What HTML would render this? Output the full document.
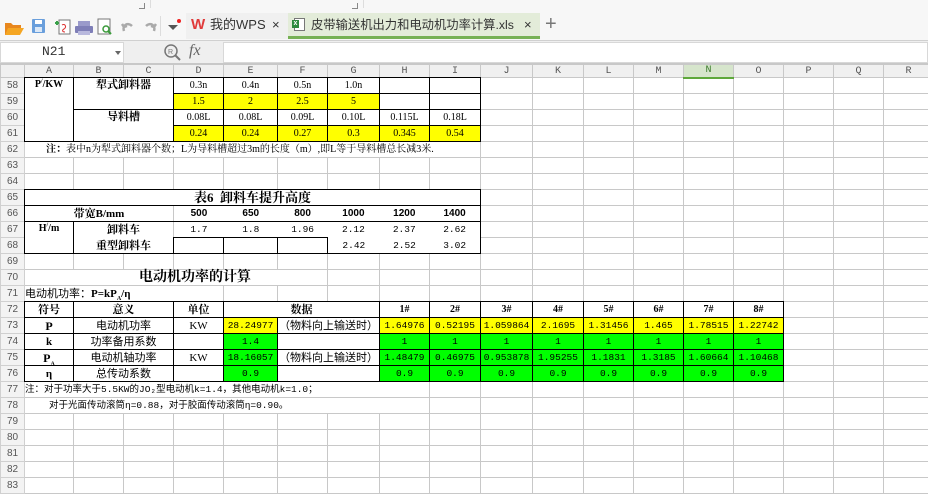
<!DOCTYPE html>
<html><head><meta charset="utf-8">
<style>
*{margin:0;padding:0;box-sizing:border-box}
body{width:928px;height:494px;overflow:hidden;background:#fff;position:relative;font-family:"Liberation Serif","Noto Serif CJK SC",serif}
.tb{position:absolute;left:0;top:0;width:928px;height:41px;background:#f7f7f7;border-bottom:1px solid #d0d0d0}
.fb{position:absolute;left:0;top:41px;width:928px;height:23px;background:#efefef;border-bottom:1px solid #c8c8c8}
table{position:absolute;left:0;top:64px;border-collapse:collapse;table-layout:fixed;width:933px}
td{border:1px solid #c8c8c8;height:16px;padding:0;font-size:10px;line-height:14px;text-align:center;white-space:nowrap;overflow:visible;vertical-align:middle}
sub,sup{line-height:0;font-size:6px}
tr.h td{background:#f0f0f0;color:#555;font-family:"Liberation Mono",monospace;font-size:10px;height:13px;line-height:11px}
td.rn{background:#f3f3f3;color:#555;font-family:"Liberation Sans",sans-serif;font-size:10px;text-align:center;border-color:#d0d0d0}
.k{border:1px double #000}
.bt{border-top:1px double #000}.bb{border-bottom:1px double #000}.bl{border-left:1px double #000}.br{border-right:1px double #000}
.y{background:#ffff00}.g{background:#00ff00}
.bo{font-weight:bold}
.m{font-family:"Liberation Mono","Noto Sans CJK SC",monospace;font-size:9.5px;letter-spacing:0}
.c{font-family:"Liberation Sans","Noto Sans CJK SC",sans-serif;font-size:11px}
.l{text-align:left}
.fx{display:flex}.fx div{text-align:center}
.tt{position:absolute;font:13px/16px 'Liberation Sans','Noto Sans CJK SC',sans-serif;color:#333}
</style></head><body>
<div class="tb">
  <div style="position:absolute;left:139px;top:3px;width:6px;height:6px;border:1px solid #888;border-top:none;border-left:none"></div>
  <div style="position:absolute;left:150px;top:0;width:1px;height:8px;background:#ddd"></div>
  <div style="position:absolute;left:352px;top:3px;width:6px;height:6px;border:1px solid #888;border-top:none;border-left:none"></div>
  <div style="position:absolute;left:363px;top:0;width:1px;height:8px;background:#ddd"></div>
  <svg style="position:absolute;left:4px;top:17px" width="160" height="20">
    <path d="M1 6h6l2 2h8v3H5l-3 7H1z" fill="#e8871e"/><path d="M4 11h16l-4 7H1z" fill="#f5a623"/>
    <rect x="28" y="2" width="13" height="14" rx="1" fill="#6a9fdc"/><rect x="31" y="3" width="7" height="4" fill="#fff"/><rect x="31" y="10" width="7" height="5" fill="#dbe8f7"/>
    <rect x="55" y="3" width="11" height="14" fill="#fff" stroke="#777"/><path d="M51 6h4M53 4v4" stroke="#3aa14a" stroke-width="2"/><path d="M58 8c3-2 5 2 2 4-2 1-2 3 1 3" stroke="#d33" fill="none"/>
    <rect x="71" y="9" width="18" height="7" rx="1" fill="#7f7fb8"/><rect x="74" y="4" width="12" height="5" fill="#9a9acb"/><rect x="74" y="14" width="12" height="4" fill="#b8b8dd"/>
    <rect x="94" y="2" width="12" height="15" fill="#fff" stroke="#777"/><circle cx="102" cy="12" r="3" fill="none" stroke="#3a9a3a" stroke-width="1.5"/><path d="M104 14l3 3" stroke="#3a9a3a" stroke-width="2"/>
    <path d="M120 14c-2-6 4-9 8-5M118 7l2 3 3-1" stroke="#aaa" stroke-width="2.5" fill="none"/>
    <path d="M150 14c2-6-4-9-8-5M152 7l-2 3-3-1" stroke="#aaa" stroke-width="2.5" fill="none"/>
  </svg>
  <div style="position:absolute;left:160px;top:16px;width:1px;height:20px;background:#ddd"></div>
  <div style="position:absolute;left:168px;top:25px;width:0;height:0;border-left:5px solid transparent;border-right:5px solid transparent;border-top:5px solid #555"></div>
  <div style="position:absolute;left:177px;top:19px;width:4px;height:4px;border-radius:50%;background:#e22"></div>
  <div style="position:absolute;left:186px;top:13px;width:102px;height:26px;background:#f0f0f0"></div>
  <div style="position:absolute;left:191px;top:17px;font:bold 15px/16px 'Liberation Sans',sans-serif;color:#e03a3a">W</div>
  <div class="tt" style="left:210px;top:17px">我的WPS</div>
  <div class="tt" style="left:272px;top:17px">×</div>
  <div style="position:absolute;left:288px;top:13px;width:252px;height:26px;background:#e3ecd9;border-bottom:3px solid #76b154"></div>
  <div style="position:absolute;left:294px;top:18px;width:11px;height:13px;border:1px solid #777;background:#fff"></div>
  <div style="position:absolute;left:292px;top:20px;width:7px;height:8px;background:#2d8a3e;color:#fff;font:bold 7px/8px sans-serif;text-align:center">x</div>
  <div class="tt" style="left:311px;top:17px;font-size:12.3px">皮带输送机出力和电动机功率计算.xls</div>
  <div class="tt" style="left:524px;top:17px">×</div>
  <div style="position:absolute;left:545px;top:14px;font:20px/20px 'Liberation Sans',sans-serif;color:#777">+</div>
</div>
<div class="fb">
  <div style="position:absolute;left:0;top:1px;width:124px;height:21px;background:#fff;border:1px solid #d8d8d8"></div>
  <div style="position:absolute;left:42px;top:3px;font:13px/16px 'Liberation Mono',monospace;color:#333">N21</div>
  <div style="position:absolute;left:115px;top:10px;border-left:3px solid transparent;border-right:3px solid transparent;border-top:4px solid #666"></div>
  <svg style="position:absolute;left:163px;top:3px" width="20" height="18"><circle cx="8" cy="7" r="6" fill="none" stroke="#777" stroke-width="1.5"/><path d="M12 11l5 5" stroke="#777" stroke-width="2"/><text x="5" y="10" font-size="7" fill="#777" font-family="Liberation Sans">R</text></svg>
  <div style="position:absolute;left:189px;top:1px;font:italic 16px/18px 'Liberation Serif',serif;color:#666">fx</div>
  <div style="position:absolute;left:223px;top:1px;width:705px;height:21px;background:#fff;border:1px solid #d8d8d8"></div>
</div>
<table>
<colgroup><col style="width:24px"><col style="width:49px"><col style="width:50px"><col style="width:50px"><col style="width:50px"><col style="width:54px"><col style="width:50px"><col style="width:52px"><col style="width:50px"><col style="width:51px"><col style="width:52px"><col style="width:51px"><col style="width:50px"><col style="width:50px"><col style="width:50px"><col style="width:50px"><col style="width:50px"><col style="width:50px"><col style="width:50px"></colgroup>
<tr class="h"><td></td><td>A</td><td>B</td><td>C</td><td>D</td><td>E</td><td>F</td><td>G</td><td>H</td><td>I</td><td>J</td><td>K</td><td>L</td><td>M</td><td style="background:#d6e5cc;color:#3a7a2a;border-bottom:2px solid #5ea83b">N</td><td>O</td><td>P</td><td>Q</td><td>R</td></tr>
<tr><td class="rn">58</td><td class="k bo" rowspan="4" style="vertical-align:top">P<sup>/</sup>/KW</td><td class="k bo" colspan="2" rowspan="2" style="vertical-align:top;font-size:11px">犁式卸料器</td><td class="k">0.3n</td><td class="k">0.4n</td><td class="k">0.5n</td><td class="k">1.0n</td><td class="k"></td><td class="k"></td><td></td><td></td><td></td><td></td><td></td><td></td><td></td><td></td><td></td></tr>
<tr><td class="rn">59</td><td class="k y">1.5</td><td class="k y">2</td><td class="k y">2.5</td><td class="k y">5</td><td class="k"></td><td class="k"></td><td></td><td></td><td></td><td></td><td></td><td></td><td></td><td></td><td></td></tr>
<tr><td class="rn">60</td><td class="k bo" colspan="2" rowspan="2" style="vertical-align:top;font-size:11px">导料槽</td><td class="k">0.08L</td><td class="k">0.08L</td><td class="k">0.09L</td><td class="k">0.10L</td><td class="k">0.115L</td><td class="k">0.18L</td><td></td><td></td><td></td><td></td><td></td><td></td><td></td><td></td><td></td></tr>
<tr><td class="rn">61</td><td class="k y">0.24</td><td class="k y">0.24</td><td class="k y">0.27</td><td class="k y">0.3</td><td class="k y">0.345</td><td class="k y">0.54</td><td></td><td></td><td></td><td></td><td></td><td></td><td></td><td></td><td></td></tr>
<tr><td class="rn">62</td><td colspan="9" class="l" style="padding-left:21px;overflow:hidden"><b>注：</b>表中n为犁式卸料器个数；L为导料槽超过3m的长度（m）,即L等于导料槽总长减3米.</td><td></td><td></td><td></td><td></td><td></td><td></td><td></td><td></td><td></td></tr>
<tr><td class="rn">63</td><td></td><td></td><td></td><td></td><td></td><td></td><td></td><td></td><td></td><td></td><td></td><td></td><td></td><td></td><td></td><td></td><td></td><td></td></tr>
<tr><td class="rn">64</td><td></td><td></td><td></td><td></td><td></td><td></td><td></td><td></td><td></td><td></td><td></td><td></td><td></td><td></td><td></td><td></td><td></td><td></td></tr>
<tr><td class="rn">65</td><td colspan="9" class="k bo" style="font-size:13px">表6&nbsp; 卸料车提升高度</td><td></td><td></td><td></td><td></td><td></td><td></td><td></td><td></td><td></td></tr>
<tr><td class="rn">66</td><td colspan="3" class="bo bl bb bt" style="font-size:11px">带宽B/mm</td><td colspan="6" class="bb bt br" style="font-family:'Liberation Sans',sans-serif;font-weight:bold"><div class="fx"><div style="width:50px">500</div><div style="width:54px">650</div><div style="width:50px">800</div><div style="width:52px">1000</div><div style="width:50px">1200</div><div style="width:51px">1400</div></div></td><td></td><td></td><td></td><td></td><td></td><td></td><td></td><td></td><td></td></tr>
<tr><td class="rn">67</td><td rowspan="2" class="k bo" style="vertical-align:top">H<sup>/</sup>/m</td><td colspan="2" class="bo bl" style="font-size:11px;border-bottom-color:#fff">卸料车</td><td colspan="6" class="br m" style="border-bottom-color:#fff"><div class="fx"><div style="width:50px">1.7</div><div style="width:54px">1.8</div><div style="width:50px">1.96</div><div style="width:52px">2.12</div><div style="width:50px">2.37</div><div style="width:51px">2.62</div></div></td><td></td><td></td><td></td><td></td><td></td><td></td><td></td><td></td><td></td></tr>
<tr><td class="rn">68</td><td colspan="2" class="bo bl bb" style="font-size:11px">重型卸料车</td><td class="k"></td><td class="k"></td><td class="k"></td><td colspan="3" class="bb br m"><div class="fx"><div style="width:52px">2.42</div><div style="width:50px">2.52</div><div style="width:51px">3.02</div></div></td><td></td><td></td><td></td><td></td><td></td><td></td><td></td><td></td><td></td></tr>
<tr><td class="rn">69</td><td></td><td></td><td></td><td></td><td></td><td></td><td></td><td></td><td></td><td></td><td></td><td></td><td></td><td></td><td></td><td></td><td></td><td></td></tr>
<tr><td class="rn">70</td><td colspan="6" class="l bo" style="padding-left:114px;font-size:14px;line-height:14px">电动机功率的计算</td><td></td><td></td><td></td><td></td><td></td><td></td><td></td><td></td><td></td><td></td><td></td><td></td></tr>
<tr><td class="rn">71</td><td colspan="4" class="l c">电动机功率：<b style="font-family:'Liberation Serif',serif">P=kP<sub>A</sub>/η</b></td><td></td><td></td><td></td><td></td><td></td><td></td><td></td><td></td><td></td><td></td><td></td><td></td><td></td><td></td></tr>
<tr><td class="rn">72</td><td class="k bo" style="font-size:11px">符号</td><td colspan="2" class="k bo" style="font-size:11px">意义</td><td class="k bo" style="font-size:11px">单位</td><td colspan="3" class="k bo" style="font-size:11px">数据</td><td class="k bo">1#</td><td class="k bo">2#</td><td class="k bo">3#</td><td class="k bo">4#</td><td class="k bo">5#</td><td class="k bo">6#</td><td class="k bo">7#</td><td class="k bo">8#</td><td></td><td></td><td></td></tr>
<tr><td class="rn">73</td><td class="k bo" style="font-size:12px">P</td><td colspan="2" class="k c">电动机功率</td><td class="k" style="font-size:11px">KW</td><td class="k y m">28.24977</td><td colspan="2" class="k c">（物料向上输送时）</td><td class="k y m">1.64976</td><td class="k y m">0.52195</td><td class="k y m">1.059864</td><td class="k y m">2.1695</td><td class="k y m">1.31456</td><td class="k y m">1.465</td><td class="k y m">1.78515</td><td class="k y m">1.22742</td><td></td><td></td><td></td></tr>
<tr><td class="rn">74</td><td class="k bo" style="font-size:11px">k</td><td colspan="2" class="k c">功率备用系数</td><td class="k"></td><td class="k g m">1.4</td><td colspan="2" class="k"></td><td class="k g m">1</td><td class="k g m">1</td><td class="k g m">1</td><td class="k g m">1</td><td class="k g m">1</td><td class="k g m">1</td><td class="k g m">1</td><td class="k g m">1</td><td></td><td></td><td></td></tr>
<tr><td class="rn">75</td><td class="k bo" style="font-size:12px">P<sub>A</sub></td><td colspan="2" class="k c">电动机轴功率</td><td class="k" style="font-size:11px">KW</td><td class="k g m">18.16057</td><td colspan="2" class="k c">（物料向上输送时）</td><td class="k g m">1.48479</td><td class="k g m">0.46975</td><td class="k g m">0.953878</td><td class="k g m">1.95255</td><td class="k g m">1.1831</td><td class="k g m">1.3185</td><td class="k g m">1.60664</td><td class="k g m">1.10468</td><td></td><td></td><td></td></tr>
<tr><td class="rn">76</td><td class="k bo" style="font-size:11px">η</td><td colspan="2" class="k c">总传动系数</td><td class="k"></td><td class="k g m">0.9</td><td colspan="2" class="k"></td><td class="k g m">0.9</td><td class="k g m">0.9</td><td class="k g m">0.9</td><td class="k g m">0.9</td><td class="k g m">0.9</td><td class="k g m">0.9</td><td class="k g m">0.9</td><td class="k g m">0.9</td><td></td><td></td><td></td></tr>
<tr><td class="rn">77</td><td colspan="8" class="l m">注：对于功率大于5.5KW的JO₂型电动机k=1.4，其他电动机k=1.0；</td><td></td><td></td><td></td><td></td><td></td><td></td><td></td><td></td><td></td><td></td></tr>
<tr><td class="rn">78</td><td colspan="8" class="l m" style="padding-left:24px">对于光面传动滚筒η=0.88，对于胶面传动滚筒η=0.90。</td><td></td><td></td><td></td><td></td><td></td><td></td><td></td><td></td><td></td><td></td></tr>
<tr><td class="rn">79</td><td></td><td></td><td></td><td></td><td></td><td></td><td></td><td></td><td></td><td></td><td></td><td></td><td></td><td></td><td></td><td></td><td></td><td></td></tr>
<tr><td class="rn">80</td><td></td><td></td><td></td><td></td><td></td><td></td><td></td><td></td><td></td><td></td><td></td><td></td><td></td><td></td><td></td><td></td><td></td><td></td></tr>
<tr><td class="rn">81</td><td></td><td></td><td></td><td></td><td></td><td></td><td></td><td></td><td></td><td></td><td></td><td></td><td></td><td></td><td></td><td></td><td></td><td></td></tr>
<tr><td class="rn">82</td><td></td><td></td><td></td><td></td><td></td><td></td><td></td><td></td><td></td><td></td><td></td><td></td><td></td><td></td><td></td><td></td><td></td><td></td></tr>
<tr><td class="rn">83</td><td></td><td></td><td></td><td></td><td></td><td></td><td></td><td></td><td></td><td></td><td></td><td></td><td></td><td></td><td></td><td></td><td></td><td></td></tr>
</table>
</body></html>
